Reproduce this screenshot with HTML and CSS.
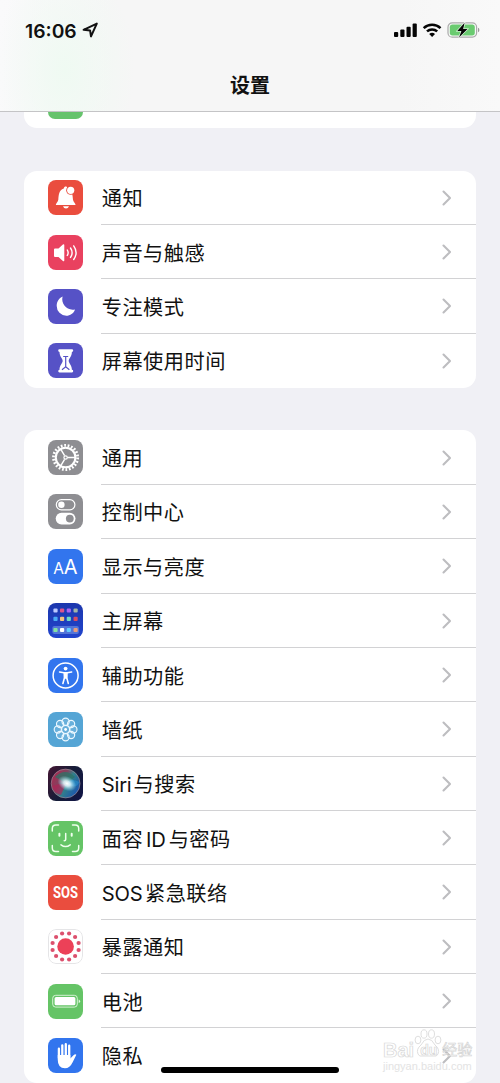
FILE: index.html
```html
<!DOCTYPE html>
<html lang="zh-CN">
<head>
<meta charset="utf-8">
<title>设置</title>
<link rel="stylesheet" href="styles.css">
</head>
<body>
<svg class="defs" width="0" height="0"><symbol id="chevron" viewBox="0 0 10 16"><path d="m1.500 1.500 6.500 6.500-6.500 6.500"/></symbol></svg>
<div class="phone">
  <header class="header">
    <div class="status">
      <span class="clock">16:06</span>
      <svg class="location" width="17" height="16" viewBox="0 0 17 16"><path d="M1.600 7.800 14.800 1.600 9 14.400 8.100 8.400Z" fill="none" stroke="#111" stroke-width="2" stroke-linejoin="round"/></svg>
      <svg class="signals" width="86" height="18" viewBox="0 0 86 18">
        <g fill="#050505"><rect x="0" y="10" width="4.2" height="5" rx="1"/><rect x="6.3" y="7.600" width="4.2" height="7.400" rx="1"/><rect x="12.500" y="4.800" width="4.200" height="10.200" rx="1"/><rect x="18.600" y="1.400" width="4.200" height="13.600" rx="1"/></g>
        <g fill="none" stroke="#050505" stroke-width="2.500"><path d="M29.700 6.100a12.200 12.200 0 0 1 16.800 0"/><path d="M33 9.400a7.500 7.500 0 0 1 10.200 0"/></g><path d="M35.200 12.100a4.300 4.300 0 0 1 5.800 0L38.100 15Z" fill="#050505"/>
        <rect x="54" y=".9" width="28.600" height="14.200" rx="4.200" fill="none" stroke="#aaa" stroke-width="1.200"/><rect x="55.800" y="2.600" width="25" height="10.800" rx="2.700" fill="#6acb70"/><path d="M84 5.700q1.400.6 1.400 2.300T84 10.300Z" fill="#999"/>
        <path d="M70.600.8 63.200 9h4.200L65 15.400 73.600 7h-4.400Z" fill="#050505" stroke="#f3fff3" stroke-width="1.200" paint-order="stroke"/>
      </svg>
    </div>
    <h1 class="title">设置</h1>
  </header>

  <main class="content">
    <section class="card card-tail"><div class="tail-icon"></div></section>

    <section class="card">
      <div class="row"><svg class="icon red" viewBox="0 0 35 35"><path d="M7.800 25c.2-1.800 2.200-2.700 2.500-5.200.4-4.800.5-9.800 5.500-11.300.3-1.300 1-1.900 1.900-1.900s1.600.6 1.900 1.900c4.700 1.500 5 6.700 5.400 11.300.3 2.500 2.400 3.400 2.600 5.200Z" fill="#fff"/><circle cx="22.700" cy="10.300" r="4.500" fill="#ea4d3e"/><circle cx="22.700" cy="10.300" r="3.600" fill="#fff"/><path d="M15 26.200h6q-.8 2.200-3 2.200t-3-2.200" fill="#fff"/></svg><div class="label">通知</div><svg class="arrow"><use href="#chevron"/></svg></div>
      <div class="row"><svg class="icon pink" viewBox="0 0 35 35"><path d="M6 14.500q0-1 1-1h3.500l4.400-3.900q1.400-1 1.400.7v14.900q0 1.700-1.400.7l-4.400-3.900H7q-1 0-1-1Z" fill="#fff"/><g fill="none" stroke="#fff" stroke-width="1.400" stroke-linecap="round"><path d="M19.300 15q1.700 2.700 0 5.400"/><path d="M22.500 13q3.200 4.700 0 9.400"/><path d="M25.700 10.900q4.800 6.800 0 13.600"/></g></svg><div class="label">声音与触感</div><svg class="arrow"><use href="#chevron"/></svg></div>
      <div class="row"><svg class="icon indigo" viewBox="0 0 35 35"><path d="M14.600 7.600C12.500 15 19.500 22.300 27 20.400 25.600 24.300 22.300 26.700 18.200 26.700A9.600 9.600 0 0 1 8.700 17.100C8.700 12.600 11 9.100 14.600 7.600Z" fill="#fff"/></svg><div class="label">专注模式</div><svg class="arrow"><use href="#chevron"/></svg></div>
      <div class="row"><svg class="icon indigo" viewBox="0 0 35 35"><path d="M11.500 6.200h12.400q1.300 0 1.300 1.300t-1.300 1.400c0 4.600-3.200 6.400-3.200 8.900s3.200 4.300 3.200 8.900q1.300 0 1.300 1.400t-1.300 1.300H11.500q-1.300 0-1.300-1.300t1.300-1.400c0-4.600 3.200-6.400 3.200-8.900s-3.200-4.300-3.200-8.900q-1.300 0-1.300-1.400t1.300-1.300Z" fill="#fff"/><path d="M15.200 13.500h5M17.700 14v10.500M14 26.700l3.700-3 3.700 3" stroke="#5652c6" stroke-width="1.200" fill="none"/></svg><div class="label">屏幕使用时间</div><svg class="arrow"><use href="#chevron"/></svg></div>
    </section>

    <section class="card">
      <div class="row"><svg class="icon gray" viewBox="0 0 35 35"><g fill="none" stroke="#fff"><circle cx="17.600" cy="17.500" r="12.100" stroke-width="2.800" stroke-dasharray="1.750 1.705"/><circle cx="17.600" cy="17.500" r="9.800" stroke-width="2.100"/><circle cx="17.600" cy="17.500" r="1.700" stroke-width="1.200"/><path d="M19.400 17.500h7.800M16.600 15.700l-3.900-6.600M16.600 19.300l-3.900 6.600" stroke-width="1.400"/></g></svg><div class="label">通用</div><svg class="arrow"><use href="#chevron"/></svg></div>
      <div class="row"><svg class="icon gray" viewBox="0 0 35 35"><rect x="8.300" y="5.700" width="18.600" height="10.200" rx="5.100" fill="none" stroke="#fff" stroke-width="1.200"/><circle cx="13.400" cy="10.800" r="3.200" fill="#fff"/><rect x="7.700" y="18.800" width="19.800" height="11.600" rx="5.800" fill="#fff"/><circle cx="21.800" cy="24.600" r="3.900" fill="#8e8e92"/></svg><div class="label">控制中心</div><svg class="arrow"><use href="#chevron"/></svg></div>
      <div class="row"><svg class="icon blue" viewBox="0 0 35 35"><text class="glyph" x="5.300" y="24.600" font-size="15.500">A</text><text class="glyph" x="15.800" y="24.600" font-size="20">A</text></svg><div class="label">显示与亮度</div><svg class="arrow"><use href="#chevron"/></svg></div>
      <div class="row"><svg class="icon navy" viewBox="0 0 35 35"><rect x="4.300" y="23" width="26.600" height="8" rx="2" fill="#5274d8"/><g><rect x="5.400" y="5.400" width="4.200" height="4.200" rx="1" fill="#bcc9ff"/><rect x="12" y="5.400" width="4.200" height="4.200" rx="1" fill="#dc558c"/><rect x="18.700" y="5.400" width="4.200" height="4.200" rx="1" fill="#aa65f1"/><rect x="25.500" y="5.400" width="4.200" height="4.200" rx="1" fill="#a1b5a8"/><rect x="5.400" y="13.700" width="4.200" height="4.200" rx="1" fill="#4aaaf5"/><rect x="12" y="13.700" width="4.200" height="4.200" rx="1" fill="#f3c27f"/><rect x="18.700" y="13.700" width="4.200" height="4.200" rx="1" fill="#6edbc4"/><rect x="25.500" y="13.700" width="4.200" height="4.200" rx="1" fill="#d54d66"/><rect x="5.400" y="24.900" width="4.200" height="4.200" rx="1" fill="#82e2a5"/><rect x="12" y="24.900" width="4.200" height="4.200" rx="1" fill="#fff"/><rect x="18.700" y="24.900" width="4.200" height="4.200" rx="1" fill="#62ccff"/><rect x="25.500" y="24.900" width="4.200" height="4.200" rx="1" fill="#e99c7d"/></g></svg><div class="label">主屏幕</div><svg class="arrow"><use href="#chevron"/></svg></div>
      <div class="row"><svg class="icon blue" viewBox="0 0 35 35"><circle cx="17.600" cy="17.500" r="12.500" fill="none" stroke="#fff" stroke-width="1.500"/><circle cx="17.600" cy="10.600" r="1.900" fill="#fff"/><path d="m11.600 14 4.300.8h3.400l4.300-.8M16.400 15v5l-1.500 5.500M18.800 15v5l1.500 5.500" fill="none" stroke="#fff" stroke-width="1.600" stroke-linecap="round" stroke-linejoin="round"/><path d="M15.700 14.500h3.800l-.4 6.300h-3Z" fill="#fff"/></svg><div class="label">辅助功能</div><svg class="arrow"><use href="#chevron"/></svg></div>
      <div class="row"><svg class="icon sky" viewBox="0 0 35 35"><g fill="#e6f5ff" fill-opacity=".14" stroke="#ecf8ff" stroke-width="1.150"><circle cx="17.600" cy="9.700" r="3.600"/><circle cx="23.100" cy="12" r="3.600"/><circle cx="25.400" cy="17.500" r="3.600"/><circle cx="23.100" cy="23" r="3.600"/><circle cx="17.600" cy="25.300" r="3.600"/><circle cx="12.100" cy="23" r="3.600"/><circle cx="9.800" cy="17.500" r="3.600"/><circle cx="12.100" cy="12" r="3.600"/><circle cx="17.600" cy="17.500" r="4"/></g><circle cx="17.600" cy="17.500" r="1.400" fill="#fff"/></svg><div class="label">墙纸</div><svg class="arrow"><use href="#chevron"/></svg></div>
      <div class="row"><svg class="icon siri" viewBox="0 0 35 35"><defs><linearGradient id="orb" x1="0" y1=".2" x2="1" y2=".8"><stop offset="0" stop-color="#ad2751"/><stop offset=".35" stop-color="#80445f"/><stop offset=".55" stop-color="#32808a"/><stop offset="1" stop-color="#1750b5"/></linearGradient><radialGradient id="glow"><stop offset="0" stop-color="#fff"/><stop offset=".35" stop-color="#e8fbff" stop-opacity=".85"/><stop offset="1" stop-color="#9ce7ff" stop-opacity="0"/></radialGradient></defs><circle cx="17.600" cy="17.500" r="14.400" fill="url(#orb)" stroke="#9a8997" stroke-width=".7"/><path d="M7 11Q17 1 27 11L18 17Z" fill="#2c7366" opacity=".75"/><path d="M4 20q9-3 14-2l-5 11Q7 28 4 20" fill="#b51f55" opacity=".6"/><path d="M18 18q5-7 13-2-2 8-13 2" fill="#278fd0" opacity=".6"/><ellipse cx="19" cy="17.500" rx="10" ry="7" transform="rotate(28 19 17.500)" fill="url(#glow)"/></svg><div class="label"><span class="latin siri-word">Siri</span>与搜索</div><svg class="arrow"><use href="#chevron"/></svg></div>
      <div class="row"><svg class="icon green" viewBox="0 0 35 35"><g fill="none" stroke="#efffed" stroke-width="1.500" stroke-linecap="round" stroke-linejoin="round"><path d="M4.300 10V7.500q0-3.500 3.500-3.500h2.700M24.500 4h2.700q3.500 0 3.500 3.500V10M30.700 24.500V27q0 3.500-3.500 3.500h-2.700M10.500 30.500H7.800q-3.500 0-3.500-3.500v-2.500"/><path d="M11.400 12.700v2.100M23.700 12.700v2.100" stroke-width="2"/><path d="M17.700 12.500v6q0 1.200-1.500 1.200M13 23.800q4.600 3.400 9.200 0"/></g></svg><div class="label">面容<span class="latin id-word">ID</span>与密码</div><svg class="arrow"><use href="#chevron"/></svg></div>
      <div class="row"><svg class="icon red" viewBox="0 0 35 35"><text class="sos" x="5" y="23.200" textLength="25" lengthAdjust="spacingAndGlyphs">SOS</text></svg><div class="label"><span class="latin sos-word">SOS</span>紧急联络</div><svg class="arrow"><use href="#chevron"/></svg></div>
      <div class="row"><svg class="icon exposure" viewBox="0 0 35 35"><rect x=".5" y=".5" width="34" height="34" rx="7.500" fill="#fff" stroke="#dedee1" stroke-width=".8"/><circle cx="17.600" cy="17.500" r="8.300" fill="#ec4158"/><g fill="#dc506d"><circle cx="21.100" cy="4.500" r="2.100"/><circle cx="27.100" cy="8" r="2.100"/><circle cx="30.600" cy="14" r="2.100"/><circle cx="30.600" cy="21" r="2.100"/><circle cx="27.100" cy="27" r="2.100"/><circle cx="21.100" cy="30.500" r="2.100"/><circle cx="14.100" cy="30.500" r="2.100"/><circle cx="8.100" cy="27" r="2.100"/><circle cx="4.600" cy="21" r="2.100"/><circle cx="4.600" cy="14" r="2.100"/><circle cx="8.100" cy="8" r="2.100"/><circle cx="14.100" cy="4.500" r="2.100"/></g></svg><div class="label">暴露通知</div><svg class="arrow"><use href="#chevron"/></svg></div>
      <div class="row"><svg class="icon green" viewBox="0 0 35 35"><rect x="4.700" y="11.300" width="24.600" height="11.800" rx="3" fill="none" stroke="#e1f7df" stroke-width=".9"/><rect x="6.600" y="13.100" width="20.800" height="8.200" rx="1.500" fill="#fff"/><path d="M30.700 15.500q1.400.4 1.400 1.800t-1.400 1.800Z" fill="#e1f7df"/></svg><div class="label">电池</div><svg class="arrow"><use href="#chevron"/></svg></div>
      <div class="row"><svg class="icon blue" viewBox="0 0 35 35"><g fill="none" stroke="#fff" stroke-width="2.300" stroke-linecap="round"><path d="M10.900 10.700V20M14.300 7.300V19M17.800 6.200V19M21.200 7.700V20"/></g><path d="M9.750 17h12.600v3.600l3.400-3.700q1.500-1.200 2.600-.2l-3.700 7.500q-2.800 6-7.700 6-7.200 0-7.200-8.500Z" fill="#fff"/></svg><div class="label">隐私</div><svg class="arrow"><use href="#chevron"/></svg></div>
    </section>
  </main>

  <div class="watermark">
    <svg class="paw" width="28" height="28" viewBox="0 0 28 28"><g fill="#fff" stroke="#dadada"><ellipse cx="4" cy="11" rx="2.900" ry="3.800"/><ellipse cx="10" cy="5" rx="3" ry="4.200"/><ellipse cx="17.500" cy="5" rx="3" ry="4.200"/><ellipse cx="24" cy="11" rx="2.900" ry="3.800"/><path d="M4 25q-2-5 3-9 3-6 7-6t7 6q5 4 3 9-1 3-5 2h-10q-4 1-5-2Z"/></g></svg>
    <div class="brand"><span>Bai</span><span class="du">du</span><span class="jingyan">经验</span></div>
    <div class="site">jingyan.baidu.com</div>
  </div>
  <div class="home-indicator"></div>
</div>
</body>
</html>
```

FILE: styles.css
```css
* { box-sizing: border-box; }
body { margin: 0; background: #f0f0f5; }
.defs { display: none; }
.phone {
  position: relative;
  width: 500px;
  height: 1083px;
  overflow: hidden;
  background: #f0f0f5;
  color: #111;
  font-family: Inter, "Noto Sans CJK SC", sans-serif;
}
.header {
  height: 112px;
  border-bottom: 1px solid #c4c4c6;
  background:
    radial-gradient(ellipse 70px 110px at 65px 70px, #effaf2 0%, rgba(239, 250, 242, 0) 100%),
    linear-gradient(90deg, #fafafb 0, #f6f6f6 110px, #f6f6f6 400px, #f9f9f9 100%);
}
.status {
  display: flex;
  align-items: center;
  height: 60px;
  padding: 0 20px 0 25px;
}
.clock {
  width: 56px;
  padding-top: 1px;
  font-size: 19.300px;
  font-weight: 600;
  line-height: 24px;
  white-space: nowrap;
}
.location { margin-left: 1px; }
.signals { margin: 1px 0 0 auto; }
.title {
  margin: 10px 0 0;
  font-family: "Noto Sans CJK SC", sans-serif;
  font-size: 20px;
  font-weight: 700;
  line-height: 30px;
  text-align: center;
}
.content { padding: 0 24px; }
.card {
  margin-bottom: 42.500px;
  overflow: hidden;
  border-radius: 13px;
  background: #fff;
}
.card-tail {
  height: 16px;
  padding-left: 24px;
  border-radius: 0 0 13px 13px;
}
.tail-icon {
  width: 35px;
  height: 6.500px;
  border-radius: 0 0 8px 8px;
  background: #66c36c;
}
.row {
  display: grid;
  grid-template-columns: 35px 1fr 10px;
  column-gap: 18px;
  align-items: center;
  height: 54.360px;
  padding: 0 24px;
  background: linear-gradient(#d2d2d4, #d2d2d4) 77px 100% / 100% 1px no-repeat;
}
.row:last-child { background: none; }
.icon { width: 35px; height: 35px; border-radius: 8px; }
.label {
  padding: 3px 0 0 .7px;
  font-size: 20.200px;
  letter-spacing: .5px;
  line-height: 30px;
  white-space: nowrap;
}
.latin { letter-spacing: -.2px; }
.siri-word { margin-right: 2px; }
.id-word { margin: 0 3px; }
.sos-word { margin-right: 2.500px; }
.arrow {
  width: 10px;
  height: 16px;
  fill: none;
  stroke: #bdbdc0;
  stroke-width: 2.100;
  stroke-linecap: round;
  stroke-linejoin: round;
}
.red { background: #ea4d3e; }
.pink { background: #e9415f; }
.indigo { background: #5652c6; }
.gray { background: #8e8e92; }
.blue { background: #3275ee; }
.navy { background: linear-gradient(#1c37ad, #2144cd); }
.sky { background: #55a5d5; }
.siri { background: linear-gradient(120deg, #441632, #161d38 50%, #101447); }
.green { background: #65c466; }
.glyph { fill: #fff; font-family: Inter, sans-serif; }
.sos {
  fill: #fff;
  font-family: Roboto, sans-serif;
  font-size: 16px;
  font-weight: 700;
}
.watermark {
  position: absolute;
  left: 383px;
  top: 1029px;
  width: 92px;
  height: 42px;
  opacity: .85;
  font-family: "Liberation Sans", "Noto Sans CJK SC", sans-serif;
}
.paw { position: absolute; left: 31px; top: 0; }
.brand {
  position: absolute;
  top: 9px;
  display: flex;
  align-items: center;
  color: #fff;
  font-size: 20px;
  font-weight: 700;
  line-height: 24px;
  white-space: nowrap;
  -webkit-text-stroke: .7px #d0d0d0;
}
.du { margin-left: 6px; font-size: 14px; }
.jingyan { margin-left: 5px; font-size: 15px; font-weight: 400; }
.site {
  position: absolute;
  top: 30px;
  color: #dedede;
  font-size: 11px;
  line-height: 14px;
  white-space: nowrap;
}
.home-indicator {
  position: absolute;
  left: 161px;
  top: 1067px;
  width: 178px;
  height: 6px;
  border-radius: 3px;
  background: #000;
}
```
